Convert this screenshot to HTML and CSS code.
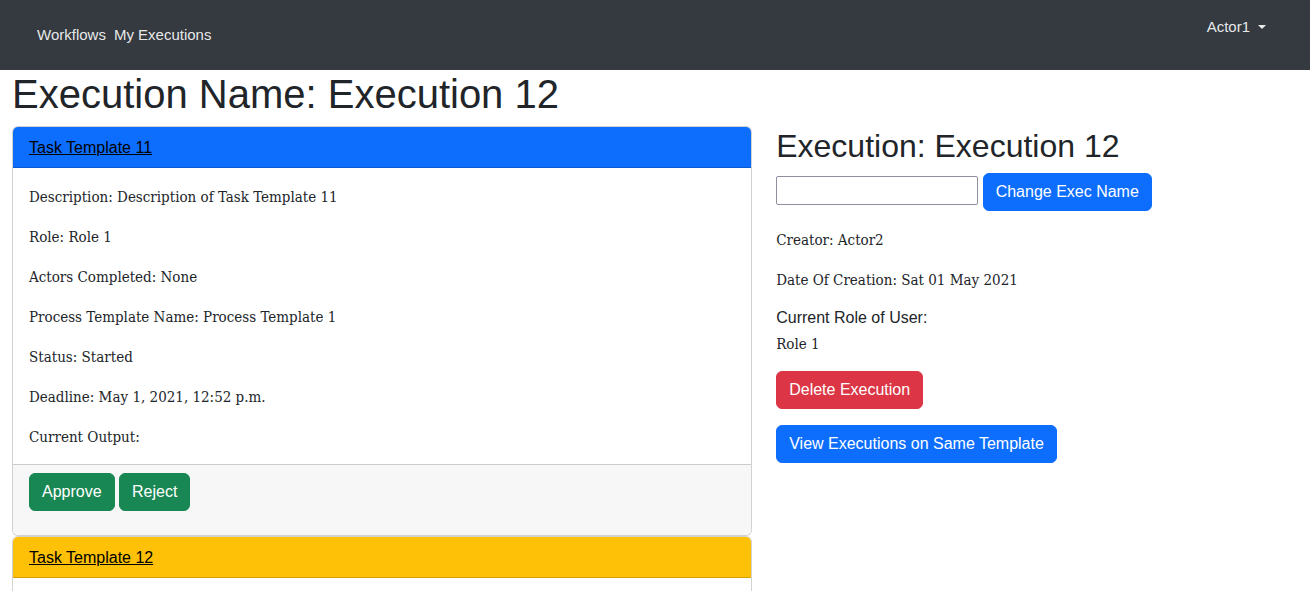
FILE: index.html
```html
<!DOCTYPE html>
<html lang="en">
<head>
<meta charset="utf-8">
<title>Execution 12</title>
<link rel="stylesheet" href="styles.css">
</head>
<body>
<nav class="navbar">
  <div class="nav-links">
    <a class="nav-link" href="#">Workflows</a>
    <a class="nav-link" href="#">My Executions</a>
  </div>
  <div class="nav-user">
    <a class="nav-link dropdown-toggle" href="#">Actor1</a>
  </div>
</nav>
<main class="container">
  <h1 class="page-title">Execution Name: Execution 12</h1>
  <div class="row">
    <div class="col-left">
      <div class="card">
        <div class="card-header header-primary"><a href="#">Task Template 11</a></div>
        <div class="card-body">
          <p>Description: Description of Task Template 11</p>
          <p>Role: Role 1</p>
          <p>Actors Completed: None</p>
          <p>Process Template Name: Process Template 1</p>
          <p>Status: Started</p>
          <p>Deadline: May 1, 2021, 12:52 p.m.</p>
          <p class="last">Current Output:</p>
        </div>
        <div class="card-footer">
          <form class="footer-form">
            <button type="button" class="btn btn-success">Approve</button>
            <button type="button" class="btn btn-success">Reject</button>
          </form>
        </div>
      </div>
      <div class="card">
        <div class="card-header header-warning"><a href="#">Task Template 12</a></div>
        <div class="card-body">
          <p>Description: Description of Task Template 12</p>
        </div>
      </div>
    </div>
    <div class="col-right">
      <h2 class="exec-title">Execution: Execution 12</h2>
      <form class="rename-form">
        <input type="text" class="rename-input"> <button type="button" class="btn btn-primary">Change Exec Name</button>
      </form>
      <p class="info">Creator: Actor2</p>
      <p class="info">Date Of Creation: Sat 01 May 2021</p>
      <div class="role-label">Current Role of User:</div>
      <p class="info role-value">Role 1</p>
      <div class="action"><button type="button" class="btn btn-danger">Delete Execution</button></div>
      <div class="action"><button type="button" class="btn btn-primary">View Executions on Same Template</button></div>
    </div>
  </div>
</main>
</body>
</html>
```
FILE: styles.css
```css
* { box-sizing: border-box; }
html, body { margin: 0; padding: 0; }
body {
  font-family: "Liberation Sans", Arial, sans-serif;
  font-size: 16px;
  line-height: 1.5;
  color: #212529;
  background: #fff;
  overflow: hidden;
}

/* navbar */
.navbar {
  height: 70px;
  background: #343a40;
  display: flex;
  justify-content: space-between;
  align-items: flex-start;
  padding: 0 44px 0 33px;
}
.nav-links {
  display: flex;
  padding-top: 24px;
}
.nav-link {
  color: rgba(255, 255, 255, 0.9);
  text-decoration: none;
  font-size: 15px;
  line-height: 22px;
  padding: 0 4px;
}
.nav-user { padding-top: 15px; }
.nav-user .nav-link { padding: 0; }
.dropdown-toggle::after {
  content: "";
  display: inline-block;
  margin-left: 8px;
  vertical-align: 3px;
  border-top: 4.5px solid rgba(255, 255, 255, 0.9);
  border-left: 4.5px solid transparent;
  border-right: 4.5px solid transparent;
  border-bottom: 0;
}

/* layout */
.container { padding: 0 12px; }
.page-title {
  margin: 0 0 8px;
  font-size: 40px;
  font-weight: 500;
  line-height: 1.2;
}
.row {
  display: grid;
  grid-template-columns: 740.2px 1fr;
  column-gap: 24px;
}

/* cards */
.card {
  border: 1px solid rgba(0, 0, 0, 0.175);
  border-radius: 6px;
  overflow: hidden;
  background: #fff;
}
.card-header {
  padding: 9px 16px 7px;
  border-bottom: 1px solid rgba(0, 0, 0, 0.175);
  line-height: 24px;
}
.card-header a { color: #000; text-decoration: underline; }
.header-primary { background: #0d6efd; }
.header-warning { background: #ffc107; }
.card-body {
  padding: 17px 16px 15px;
  font-family: "DejaVu Serif Condensed", "DejaVu Serif", serif;
  font-size: 15px;
}
.card-body p { margin: 0 0 16px; line-height: 24px; }
.card-body p.last { margin-bottom: 0; }
.card-footer {
  padding: 8px 16px;
  background: #f7f7f7;
  border-top: 1px solid rgba(0, 0, 0, 0.175);
}
.footer-form { margin: 0 0 16px; }

/* buttons */
.btn {
  display: inline-block;
  font-family: "Liberation Sans", Arial, sans-serif;
  font-size: 16px;
  line-height: 24px;
  padding: 6px 12px;
  border: 1px solid transparent;
  border-radius: 6px;
  color: #fff;
  cursor: pointer;
  vertical-align: middle;
}
.btn-success { background: #198754; border-color: #198754; }
.btn-primary { background: #0d6efd; border-color: #0d6efd; }
.btn-danger { background: #dc3545; border-color: #dc3545; }

/* right column */
.exec-title {
  margin: 1px 0 8px;
  font-size: 32px;
  font-weight: 500;
  line-height: 1.2;
}
.rename-form { margin: 0 0 17px; }
.rename-form .btn { vertical-align: top; }
.rename-input {
  width: 202px;
  height: 29px;
  padding: 1px 2px;
  font: inherit;
  border: 1px solid #8f8f9d;
  border-radius: 2px;
  vertical-align: top;
  margin: 3px 0 0;
}
.info {
  margin: 0 0 16px;
  font-family: "DejaVu Serif Condensed", "DejaVu Serif", serif;
  font-size: 15px;
  line-height: 24px;
}
.role-label { margin: 14px 0 2px; line-height: 24px; }
.info:nth-of-type(2) { margin-bottom: 0; }
.role-value { margin-bottom: 15px; }
.action { margin-bottom: 16px; }
```
